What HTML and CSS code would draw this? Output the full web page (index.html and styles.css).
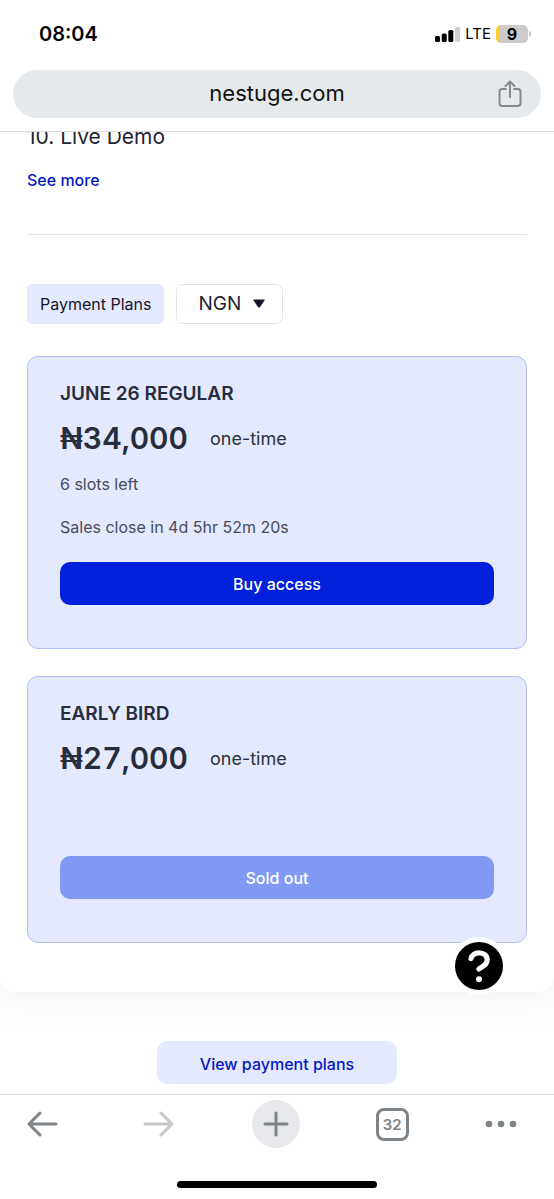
FILE: index.html
```html
<!DOCTYPE html>
<html lang="en">
<head>
<meta charset="utf-8">
<meta name="viewport" content="width=device-width, initial-scale=1">
<title>nestuge.com</title>
<link rel="stylesheet" href="styles.css">
</head>
<body>
<div class="screen">
  <header class="browser-top">
    <div class="status">
      <span class="clock">08:04</span>
      <div class="status-icons">
        <svg class="signal" width="25" height="16" viewBox="0 0 25 16" aria-hidden="true">
          <rect x="0" y="10" width="5" height="6" rx="1.5"/>
          <rect x="6.700" y="7.500" width="5" height="8.500" rx="1.500"/>
          <rect x="13.300" y="4" width="5" height="12" rx="1.500"/>
          <rect x="20" y="1" width="5" height="15" rx="1.500" fill="#d0d0d0"/>
        </svg>
        <span class="network">LTE</span>
        <span class="battery">9</span>
      </div>
    </div>
    <div class="address">
      <span class="host">nestuge.com</span>
      <button class="icon-button share" aria-label="Share">
        <svg width="24" height="28" viewBox="0 0 24 28" fill="none" stroke="#85898d" stroke-width="2" stroke-linecap="round" stroke-linejoin="round" aria-hidden="true">
          <path d="M8 9H4a2.500 2.500 0 0 0-2.500 2.500V23A3 3 0 0 0 4.500 26h15a3 3 0 0 0 3-3V11.500A2.500 2.500 0 0 0 20 9h-4M12 17V2M7.500 6 12 1.500 16.500 6"/>
        </svg>
      </button>
    </div>
  </header>

  <main class="page">
    <article class="sheet">
      <p class="topic">10. Live Demo</p>
      <a class="more" href="#more">See more</a>
      <hr class="rule">
      <div class="filters">
        <h2 class="chip">Payment Plans</h2>
        <div class="currency">
          <select class="currency-select" aria-label="Currency"><option>NGN</option></select>
          <svg class="caret" width="12" height="9" viewBox="0 0 12 9" aria-hidden="true"><path d="M1 .5h10q1 .2.500 1.100L6.800 8.200q-.8.800-1.600 0L.500 1.600Q0 .7 1 .5z" fill="#14142b"/></svg>
        </div>
      </div>
      <section class="plan">
        <h3 class="plan-name">JUNE 26 REGULAR</h3>
        <p class="price-row"><span class="price">₦34,000</span><span class="period">one-time</span></p>
        <p class="note">6 slots left</p>
        <p class="note">Sales close in 4d 5hr 52m 20s</p>
        <button class="buy">Buy access</button>
      </section>
      <section class="plan plan-closed">
        <h3 class="plan-name">EARLY BIRD</h3>
        <p class="price-row"><span class="price">₦27,000</span><span class="period">one-time</span></p>
        <button class="buy" disabled>Sold out</button>
      </section>
    </article>
    <button class="help" aria-label="Help">
      <svg width="24" height="34" viewBox="0 0 24 34" fill="none" aria-hidden="true">
        <path d="M4 9.500C4.800 6 8 3.800 12 3.800c4.800 0 8.200 3 8.200 7 0 5-4.200 6.200-8.200 9.200" stroke="#fff" stroke-width="5.200" stroke-linecap="round"/>
        <circle cx="12" cy="30.300" r="3" fill="#fff"/>
      </svg>
    </button>
  </main>

  <div class="cta"><a class="cta-link" href="#plans">View payment plans</a></div>

  <nav class="toolbar" aria-label="Browser">
    <div class="tools">
      <button class="icon-button tool" aria-label="Back">
        <svg width="32" height="26" viewBox="0 0 32 26" fill="none" stroke="#7d8387" stroke-width="3" stroke-linecap="round" stroke-linejoin="round" aria-hidden="true"><path d="M30 13H3M14 2 3 13l11 11"/></svg>
      </button>
      <button class="icon-button tool" aria-label="Forward">
        <svg width="32" height="26" viewBox="0 0 32 26" fill="none" stroke="#c6c8ca" stroke-width="3" stroke-linecap="round" stroke-linejoin="round" aria-hidden="true"><path d="M2 13h27M18 2l11 11-11 11"/></svg>
      </button>
      <button class="icon-button tool new-tab" aria-label="New tab">
        <svg width="26" height="26" viewBox="0 0 26 26" fill="none" stroke="#7d8387" stroke-width="3" stroke-linecap="round" aria-hidden="true"><path d="M13 2v22M2 13h22"/></svg>
      </button>
      <button class="icon-button tool" aria-label="Tabs, 32 open"><span class="tab-count">32</span></button>
      <button class="icon-button" aria-label="Menu">
        <svg width="32" height="8" viewBox="0 0 32 8" fill="#7d8387" aria-hidden="true"><circle cx="4" cy="4" r="3.300"/><circle cx="16" cy="4" r="3.300"/><circle cx="28" cy="4" r="3.300"/></svg>
      </button>
    </div>
    <div class="home-bar"></div>
  </nav>
</div>
</body>
</html>
```

FILE: styles.css
```css
* { box-sizing: border-box; }
body {
  margin: 0;
  background: #fff;
  color: #1f2430;
  font-family: Inter, "Liberation Sans", sans-serif;
}
h2, h3, p { margin: 0; }
button, select { font-family: inherit; }
button { border: 0; padding: 0; cursor: pointer; }
a { text-decoration: none; color: #0618c4; }

.screen {
  display: flex;
  flex-direction: column;
  height: 100vh;
}

.browser-top {
  padding: 0 13px 13px;
  border-bottom: 1px solid #d9dadb;
}
.status {
  display: flex;
  align-items: center;
  justify-content: space-between;
  height: 70px;
  padding: 0 11px 3px 26px;
  color: #000;
}
.clock { font-size: 20px; font-weight: 600; }
.status-icons { display: flex; align-items: center; gap: 5px; }
.network { font-size: 15px; }
.battery {
  position: relative;
  width: 32px;
  margin-right: 2px;
  border-radius: 5px;
  background: linear-gradient(90deg, #fbcf2c 3px, #cbcbcb 3px);
  font-size: 16px;
  font-weight: 700;
  line-height: 18px;
  text-align: center;
}
.battery::after {
  content: "";
  position: absolute;
  left: 33px;
  top: 6px;
  width: 2px;
  height: 6px;
  border-radius: 0 2px 2px 0;
  background: #cbcbcb;
}
.address {
  display: grid;
  grid-template-columns: 1fr auto 1fr;
  align-items: center;
  height: 48px;
  padding: 0 19px 2px;
  border-radius: 24px;
  background: #e6e9ec;
}
.host { grid-column: 2; color: #111; font-size: 22px; }
.share { justify-self: end; padding-top: 2px; }
.icon-button {
  display: flex;
  align-items: center;
  justify-content: center;
  background: transparent;
}

.page {
  position: relative;
  flex: 1;
  min-height: 0;
  overflow: hidden;
  background: #fdfdfd;
}
.sheet {
  margin-top: -9px;
  padding: 0 27px 49px;
  border-radius: 0 0 16px 16px;
  background: #fff;
  box-shadow: 0 8px 20px -4px rgba(0, 0, 0, 0.04);
}
.topic { font-size: 21px; line-height: 28px; }
.more {
  display: inline-block;
  margin-top: 17px;
  font-size: 16px;
  font-weight: 500;
  line-height: 24px;
}
.rule {
  margin: 42px 0 49px;
  border: 0;
  border-top: 1px solid #dbe3ea;
}
.filters { display: flex; gap: 12px; margin-bottom: 32px; }
.chip {
  padding: 0 13px;
  border-radius: 5px;
  background: #e4e9fd;
  color: #14142b;
  font-size: 16px;
  font-weight: 400;
  line-height: 40px;
}
.currency { position: relative; }
.currency-select {
  appearance: none;
  height: 40px;
  padding: 0 41px 2px 21px;
  border: 1px solid #dfe3ea;
  border-radius: 7px;
  background: #fff;
  color: #1f2430;
  font-size: 19px;
}
.caret {
  position: absolute;
  top: 15px;
  right: 18px;
  pointer-events: none;
}

.plan {
  display: flex;
  flex-direction: column;
  margin-bottom: 27px;
  padding: 23px 32px 43px;
  border: 1px solid #b2bef3;
  border-radius: 11px;
  background: #e4e9fd;
}
.plan:last-child { margin-bottom: 0; }
.plan-name {
  color: #262d3d;
  font-size: 19px;
  font-weight: 600;
  line-height: 28px;
}
.price-row {
  display: flex;
  align-items: center;
  gap: 22px;
  margin: 12px 0 16px;
  line-height: 36px;
}
.price {
  color: #262d3d;
  font-size: 30px;
  font-variant-numeric: tabular-nums;
  font-weight: 600;
}
.period { padding-top: 2px; color: #2b3140; font-size: 18px; line-height: 34px; }
.note {
  margin-bottom: 19px;
  color: #474c5b;
  font-size: 16px;
  line-height: 24px;
}
.buy {
  height: 43px;
  margin-top: 4px;
  border-radius: 10px;
  background: #0120dc;
  color: #fff;
  font-size: 16px;
  font-weight: 500;
}
.buy:disabled { background: #8099f3; cursor: default; }
.plan-closed .buy { margin-top: 64px; }

.help {
  position: absolute;
  right: 51px;
  bottom: 40px;
  display: flex;
  align-items: center;
  justify-content: center;
  width: 48px;
  height: 48px;
  border-radius: 50%;
  background: #000;
  box-shadow: 0 0 0 5px #fff;
}

.cta {
  display: flex;
  justify-content: center;
  padding: 11px 0 10px;
}
.cta-link {
  padding: 4px 43px 0;
  border-radius: 10px;
  background: #e4e9fd;
  font-size: 16px;
  font-weight: 500;
  line-height: 39px;
}

.toolbar {
  display: flex;
  flex-direction: column;
  align-items: center;
  padding: 4px 0 11px;
  border-top: 1px solid #d9dadb;
}
.tools {
  display: flex;
  align-items: center;
  justify-content: space-between;
  width: 100%;
  height: 50px;
  padding: 0 37px 0 18px;
}
.tool { width: 48px; height: 48px; }
.new-tab {
  border-radius: 50%;
  background: #e8e9ed;
}
.tab-count {
  width: 33px;
  border: 3px solid #7d8387;
  border-radius: 8px;
  color: #7d8387;
  font-size: 15px;
  font-weight: 600;
  line-height: 27px;
}
.home-bar {
  width: 36%;
  height: 7px;
  margin-top: 32px;
  border-radius: 4px;
  background: #000;
}
```
